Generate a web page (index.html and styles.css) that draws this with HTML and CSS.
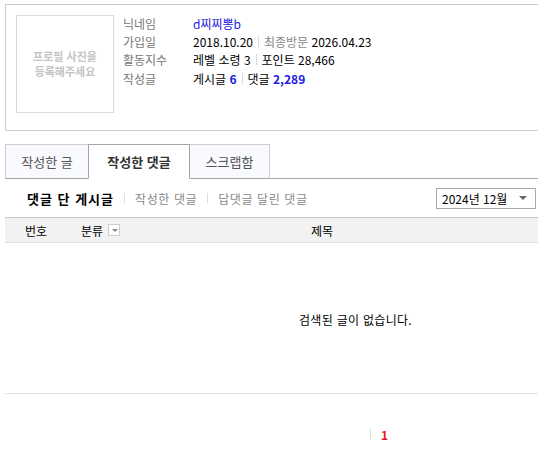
FILE: index.html
```html
<!DOCTYPE html>
<html lang="ko">
<head>
	<meta charset="UTF-8">
	<title>회원 활동</title>
	<link rel="stylesheet" href="styles.css">
</head>
<body>
	<div class="wrap">
		<!-- 프로필 -->
		<div class="profile">
			<div class="photo">프로필 사진을<br>등록해주세요</div>
			<dl class="info">
				<dt>닉네임</dt>
				<dd><span class="nick">d찌찌뽕b</span></dd>
				<dt>가입일</dt>
				<dd>2018.10.20<span class="bar"></span><span class="sub">최종방문</span> 2026.04.23</dd>
				<dt>활동지수</dt>
				<dd>레벨 소령 3<span class="bar"></span>포인트 28,466</dd>
				<dt>작성글</dt>
				<dd>게시글 <b class="num">6</b><span class="bar"></span>댓글 <b class="num">2,289</b></dd>
			</dl>
		</div>

		<!-- 탭 -->
		<ul class="tabs">
			<li>작성한 글</li>
			<li class="on">작성한 댓글</li>
			<li>스크랩함</li>
		</ul>

		<div class="submenu">
			<ul class="sublist">
				<li class="on">댓글 단 게시글</li>
				<li>작성한 댓글</li>
				<li>답댓글 달린 댓글</li>
			</ul>
			<div class="month">
				<span>2024년 12월</span>
				<span class="arr"></span>
			</div>
		</div>

		<div class="board">
			<div class="board-head">
				<span class="col-no">번호</span>
				<span class="col-cat">분류 <i class="drop"></i></span>
				<span class="col-title">제목</span>
			</div>
			<div class="empty">검색된 글이 없습니다.</div>
		</div>

		<div class="paging">
			<span class="bar"></span><b>1</b>
		</div>
	</div>
</body>
</html>
```

FILE: styles.css
```css
* {
	margin: 0;
	padding: 0;
	list-style: none;
	box-sizing: border-box;
}
html, body {
	overflow: hidden;
}
body {
	background-color: #fff;
	font-family: "Noto Sans CJK KR", "Noto Sans", sans-serif;
	font-size: 12px;
	color: #000;
}
.wrap {
	margin-left: 5px;
	width: 533px;
}

/* 프로필 */
.profile {
	display: flex;
	margin-top: 4px;
	margin-right: -10px;
	padding: 10px 10px 17px;
	height: 127px;
	border: 1px solid #cacad8;
}
.photo {
	display: flex;
	align-items: center;
	justify-content: center;
	width: 98px;
	height: 98px;
	border: 1px solid #dadada;
	font-size: 11px;
	line-height: 15px;
	font-weight: bold;
	color: #c4c4c4;
	text-align: center;
}
.info {
	display: grid;
	grid-template-columns: 70px auto;
	grid-auto-rows: 18.4px;
	align-items: center;
	margin-left: 9px;
	margin-top: -1px;
}
.info dt {
	color: #777;
}
.info dd {
	display: flex;
	align-items: center;
	white-space: pre;
}
.nick {
	color: #1c1ce0;
}
.num {
	color: #1c1ce0;
}
.bar {
	display: inline-block;
	width: 1px;
	height: 11px;
	margin: 0 5px;
	background-color: #d8d8d8;
}
.sub {
	color: #888;
}

/* 탭 */
.tabs {
	display: flex;
	margin-top: 13px;
	border-bottom: 1px solid #a4a4ac;
	margin-right: -10px;
}
.tabs li {
	display: flex;
	align-items: center;
	justify-content: center;
	height: 35px;
	margin-bottom: -1px;
	margin-left: -1px;
	border: 1px solid #cdcdd6;
	border-bottom: 1px solid #a4a4ac;
	background-color: #f9fafd;
	color: #555;
	font-size: 13px;
}
.tabs li:first-child {
	width: 84px;
	margin-left: 0;
}
.tabs li:nth-child(2) {
	width: 102px;
}
.tabs li:nth-child(3) {
	width: 81px;
}
.tabs li.on {
	position: relative;
	z-index: 1;
	background-color: #fff;
	border-color: #a4a4ac;
	border-bottom-color: #fff;
	font-weight: bold;
	color: #333;
}

/* 서브메뉴 */
.submenu {
	display: flex;
	align-items: center;
	justify-content: space-between;
	height: 38px;
	padding-left: 22px;
}
.sublist {
	display: flex;
	align-items: center;
}
.sublist li {
	display: flex;
	align-items: center;
	color: #888;
	letter-spacing: 0.6px;
}
.sublist li + li::before {
	content: "";
	display: inline-block;
	width: 1px;
	height: 10px;
	margin: 0 10px;
	background-color: #ddd;
}
.sublist li.on {
	color: #000;
	font-weight: bold;
	font-size: 13px;
	letter-spacing: 1px;
}
.month {
	display: flex;
	align-items: center;
	justify-content: space-between;
	width: 100px;
	height: 21px;
	margin-right: 2px;
	padding: 0 8px 0 5px;
	border: 1px solid #a9a9a9;
	font-size: 12px;
}
.arr {
	width: 0;
	height: 0;
	border-left: 4px solid transparent;
	border-right: 4px solid transparent;
	border-top: 4px solid #666;
}

/* 게시판 */
.board {
	margin-right: -10px;
	border-bottom: 1px solid #e4e4e4;
}
.board-head {
	display: flex;
	align-items: center;
	height: 26px;
	border-top: 1px solid #c8c8c8;
	border-bottom: 1px solid #e2e2e2;
	background-color: #f2f2f2;
}
.col-no {
	width: 76px;
	padding-left: 20px;
}
.col-cat {
	display: flex;
	align-items: center;
	width: 230px;
}
.drop {
	position: relative;
	display: inline-block;
	width: 12px;
	height: 12px;
	margin-left: 5px;
	border: 1px solid #ccc;
	background-color: #fff;
}
.drop::after {
	content: "";
	position: absolute;
	left: 3px;
	top: 4px;
	border-left: 3px solid transparent;
	border-right: 3px solid transparent;
	border-top: 3px solid #888;
}
.col-title {
	width: 24px;
}
.empty {
	display: flex;
	align-items: center;
	justify-content: center;
	height: 150px;
	padding-left: 158px;
	padding-top: 2px;
	letter-spacing: 0.3px;
}

/* 페이지 */
.paging {
	display: flex;
	align-items: center;
	height: 80px;
	padding-left: 360px;
}
.paging .bar {
	height: 10px;
}
.paging b {
	margin-left: 5px;
	color: #e8141e;
	font-size: 12px;
}
```
